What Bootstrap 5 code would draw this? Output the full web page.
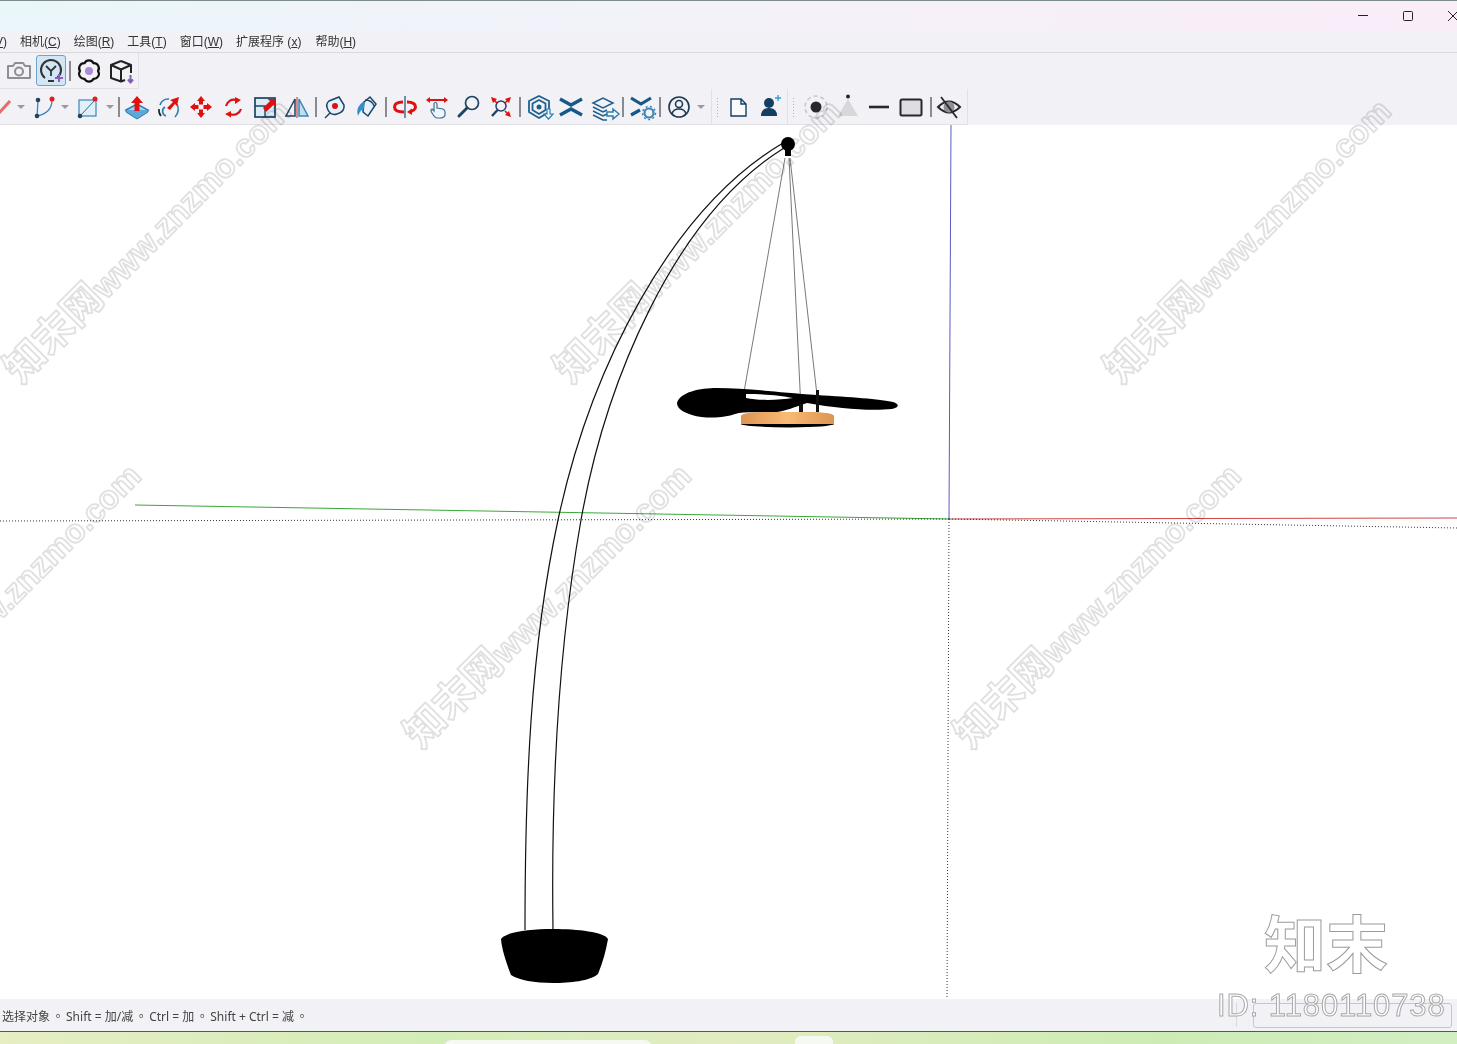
<!DOCTYPE html>
<html lang="zh">
<head>
    <meta charset="UTF-8">
    <title>SketchUp</title>
    <link href="https://cdn.jsdelivr.net/npm/bootstrap@5.3.0/dist/css/bootstrap.min.css" rel="stylesheet">
    <style>
        html, body { height: 100%; margin: 0; overflow: hidden; background: #fff; }
        .app-shell { height: 1044px; width: 1457px; position: relative; overflow: hidden; font-family: "Liberation Sans", "Noto Sans CJK SC", sans-serif; }
        .title-strip { height: 31px; border-top: 1px solid #7d8d8e; background: linear-gradient(90deg, #eaf6fa 0%, #f3f2f9 45%, #f9edf8 100%); margin-bottom: 0; }
        .win-btn { width: 45px; height: 30px; }
        .win-btn svg { display: block; margin: auto; }
        .win-row { margin-right: -18px; }
        .menu-strip { height: 22px; background: #f1f1f6; border-bottom: 1px solid #d9d9de; gap: 13px; font-size: 12px; color: #333; line-height: 23px; white-space: nowrap; padding-left: 0; }
        .menu-strip > .menu-cut { margin-left: -33px; }
        .menu-strip u { text-underline-offset: 1px; }
        .menu-strip .menu-help { margin-left: 1px; }
        .tool-row { background: #f1f1f6; flex: none; }
        .row-top { height: 36px; }
        .row-bottom { height: 36px; }
        .tool-group { background: #f1f1f6; border-right: 1px solid #e0e0e5; border-bottom: 1px solid #e0e0e5; height: 100%; }
        .slot { width: 32px; height: 32px; flex: none; }
        .slot svg { display: block; width: 32px; height: 32px; overflow: visible; }
        .caret-slot { width: 14px; flex: none; display: flex; justify-content: center; }
        .caret-shape { width: 0; height: 0; border-left: 4px solid transparent; border-right: 4px solid transparent; border-top: 4px solid #9a9a9e; }
        .divider { width: 2px; height: 20px; background: #8b8b8f; flex: none; margin: 0 2px; }
        .grip { width: 3px; height: 20px; flex: none; background-image: radial-gradient(#b5b5b8 0.8px, transparent 1px); background-size: 3px 3px; }
        .yactive { width: 30px; height: 31px; background: #d3e6f5; border: 1px solid #6ca4cd; border-radius: 3px; }
        .view3d { flex: 1; min-height: 0; background: #fff; }
        .view3d svg { display: block; }
        .status-strip { height: 32px; flex: none; background: #f1f1f6; font-family: "Noto Sans", "Noto Sans CJK TC", sans-serif; font-size: 12px; color: #444; padding-left: 2px; line-height: 35px; white-space: nowrap; position: relative; }
        .status-strip .stop { padding: 0 2px; }
        .status-cell { position: absolute; left: 1253px; top: 4px; width: 199px; height: 25px; border: 1px solid #c6c6cb; border-radius: 3px; }
        .status-tick { position: absolute; left: 1236px; top: 4px; width: 1px; height: 24px; background: #dadade; }
        .desk-strip { height: 13px; flex: none; border-top: 1px solid #55584f; background: linear-gradient(90deg, #e6eec2 0%, #d3edb8 30%, #e2ecc0 50%, #cdecb5 80%, #d2efc2 100%); position: relative; }
        .desk-pill { position: absolute; background: #f6f8f2; border-radius: 6px 6px 0 0; }
        .pill-a { left: 445px; top: 8px; width: 206px; height: 6px; }
        .pill-b { left: 795px; top: 4px; width: 38px; height: 10px; }
        .mark-overlay { position: absolute; left: 0; top: 0; pointer-events: none; }
        .mark-text { font-family: "Liberation Sans", "Noto Sans CJK SC", sans-serif; font-weight: 700; font-size: 33px; fill: #fff; stroke: #e0e0e0; stroke-width: 1.8px; stroke-linejoin: round; mix-blend-mode: multiply; }
        .mark-cjk { font-family: "Noto Sans CJK SC", sans-serif; font-size: 40px; }
        .logo-text { font-family: "Noto Sans CJK SC", sans-serif; font-weight: 700; font-size: 62px; fill: #fff; stroke: #9c9c9c; stroke-width: 1px; }
        .id-text { font-family: "Liberation Sans", sans-serif; font-size: 31px; fill: #fff; stroke: #a8a8a8; stroke-width: 1px; letter-spacing: .9px; }
    </style>
</head>
<body>
<div class="app-shell d-flex flex-column">

    <!-- title bar -->
    <div class="title-strip d-flex justify-content-end">
        <div class="d-flex win-row">
            <div class="win-btn d-flex align-items-center"><svg width="12" height="12"><path d="M1 5.500H11" stroke="#222"/></svg></div>
            <div class="win-btn d-flex align-items-center"><svg width="12" height="12"><rect x="1.500" y="1.500" width="9" height="9" rx="1" fill="none" stroke="#222"/></svg></div>
            <div class="win-btn d-flex align-items-center"><svg width="12" height="12"><path d="M1 1L11 11M11 1L1 11" stroke="#222"/></svg></div>
        </div>
    </div>

    <!-- menu -->
    <div class="menu-strip d-flex">
        <span class="menu-cut">视图(<u>V</u>)</span><span>相机(<u>C</u>)</span><span>绘图(<u>R</u>)</span><span>工具(<u>T</u>)</span><span>窗口(<u>W</u>)</span><span>扩展程序 (<u>x</u>)</span><span class="menu-help">帮助(<u>H</u>)</span>
    </div>

    <!-- first toolbar row -->
    <div class="tool-row row-top d-flex">
        <div class="tool-group d-flex align-items-center" style="width:139px">
            <div class="slot" style="margin-left:3px"><svg viewBox="0 0 32 32" fill="none" stroke="#8f8f93" stroke-width="2"><path d="M5 11H10L12 8H20L22 11H27V23H5Z" stroke-linejoin="round"/><circle cx="16" cy="16.500" r="4"/></svg></div>
            <div class="yactive d-flex align-items-center justify-content-center" style="margin-left:1px">
                <svg width="28" height="28" viewBox="0 0 28 28" fill="none" stroke="#333" stroke-width="2"><path d="M8 21A10 10 0 1 1 20 21" /><path d="M9 9L14 14L19 9M14 14V19" stroke-width="1.800"/><path d="M11 24H17" stroke-width="2"/><path d="M22 17V25M18 21H26" stroke="#8a63b8" stroke-width="2"/></svg>
            </div>
            <div class="divider" style="margin:0 2px 0 3px"></div>
            <div class="slot"><svg viewBox="0 0 32 32"><path d="M11.500 8.200A5 5 0 0 1 20.500 8.200A5 5 0 0 1 25 16A5 5 0 0 1 20.500 23.800A5 5 0 0 1 11.500 23.800A5 5 0 0 1 7 16A5 5 0 0 1 11.500 8.200Z" fill="none" stroke="#111" stroke-width="2.200" stroke-linejoin="round"/><circle cx="16" cy="16" r="4" fill="#a98ad8"/></svg></div>
            <div class="slot"><svg viewBox="0 0 32 32" fill="none" stroke="#222" stroke-width="2" stroke-linejoin="round"><path d="M16 6L26 10V18M16 6L6 10V23L16 26.500L20 25"/><path d="M6 10L16 14.500L26 10M16 14.500V26.500"/><path d="M25.500 20V27M23 24.500L25.500 27.500L28 24.500" stroke="#7e5fb0"/></svg></div>
        </div>
    </div>

    <!-- second toolbar row -->
    <div class="tool-row row-bottom d-flex">
        <div class="tool-group d-flex align-items-center" style="width:712px">
            <div class="slot" style="margin-left:-11px"><svg viewBox="0 0 32 32"><path d="M10 22L21 10" stroke="#e86a6a" stroke-width="3"/></svg></div>
            <div class="caret-slot" style="margin-left:-7px"><div class="caret-shape"></div></div>
            <div class="slot"><svg viewBox="0 0 32 32" fill="none"><path d="M9 25L10 10" stroke="#3d85b5" stroke-width="1.300"/><path d="M9 25Q24 22 24 9" stroke="#3d85b5" stroke-width="1.300"/><circle cx="9" cy="25" r="2.300" fill="#1d4463"/><circle cx="10" cy="9" r="2.300" fill="#1d4463"/><circle cx="24" cy="8" r="2.500" fill="#dc2020"/></svg></div>
            <div class="caret-slot" style="margin-left:-2px"><div class="caret-shape"></div></div>
            <div class="slot" style="margin-left:-1px"><svg viewBox="0 0 32 32" fill="none"><rect x="8" y="9" width="17" height="16" fill="#dff0fa" stroke="#3d85b5" stroke-width="1.200"/><path d="M9 25L24 9" stroke="#2f6a94" stroke-width="1"/><circle cx="9" cy="25" r="2.300" fill="#1d4463"/><circle cx="24" cy="8" r="2.500" fill="#dc2020"/></svg></div>
            <div class="caret-slot"><div class="caret-shape"></div></div>
            <div class="divider" style="margin:0 1px"></div>
            <div class="slot"><svg viewBox="0 0 32 32"><path d="M5 19L16 13L27 19L16 26Z" fill="#a6d6f2" stroke="#2f7cae" stroke-width="1.500"/><path d="M5 19V21L16 28L27 21V19" fill="#5ba9d8" stroke="#2f7cae"/><path d="M16 5L22 12H18.500V20H13.500V12H10Z" fill="#e01010"/></svg></div>
            <div class="slot"><svg viewBox="0 0 32 32" fill="none"><path d="M7 14A9 9 0 0 1 16 8" stroke="#2f7cae" stroke-width="1.600"/><path d="M8 25A9 9 0 0 1 6 18" stroke="#222" stroke-width="1.600"/><path d="M13 25A5 5 0 0 1 12 16" stroke="#2f7cae" stroke-width="1.600"/><path d="M24 13A12 12 0 0 1 22 26" stroke="#2f7cae" stroke-width="1.600"/><path d="M14 17L20 11L17 9L26 6L24 15L22 13L17 19Z" fill="#e01010"/></svg></div>
            <div class="slot"><svg viewBox="0 0 32 32" fill="#e01010"><path d="M16 5L20 10H18V13.500H14V10H12Z"/><path d="M16 27L20 22H18V18.500H14V22H12Z"/><path d="M5 16L10 12V14H13.500V18H10V20Z"/><path d="M27 16L22 12V14H18.500V18H22V20Z"/></svg></div>
            <div class="slot"><svg viewBox="0 0 32 32" fill="none"><path d="M9 15A8 8 0 0 1 19 9" stroke="#e01010" stroke-width="2.200"/><path d="M24 18A8 8 0 0 1 13 23" stroke="#e01010" stroke-width="2.200"/><path d="M18 6L24 9L18 13Z M14 20L8 23L14 26.500Z" fill="#e01010"/></svg></div>
            <div class="slot"><svg viewBox="0 0 32 32" fill="none"><rect x="6" y="7" width="20" height="19" fill="#dcecf7" stroke="#1d4463" stroke-width="1.700"/><path d="M6 15H16V26" stroke="#1d4463" stroke-width="1.400"/><path d="M14 17L21 10L18.500 8H27V16.500L24.500 14L17 21Z" fill="#e01010"/></svg></div>
            <div class="slot"><svg viewBox="0 0 32 32" fill="none"><path d="M14 8V25H5Z" stroke="#1d4463" stroke-width="1.500"/><path d="M18 8V25H27Z" fill="#bcdff4" stroke="#3d85b5" stroke-width="1.500"/><path d="M16 6V27" stroke="#e06060" stroke-width="1.500"/></svg></div>
            <div class="divider" style="margin:0 1px 0 2px"></div>
            <div class="slot"><svg viewBox="0 0 32 32" fill="none"><path d="M7 27L12 22" stroke="#1d4463" stroke-width="1.500"/><path d="M10 19Q7 13 11 10L21 6L26 14Q27 21 19 23Q13 25 10 19Z" fill="#e4f1fa" stroke="#1d4463" stroke-width="1.500"/><circle cx="17" cy="15" r="3" fill="#e01010"/></svg></div>
            <div class="slot"><svg viewBox="0 0 32 32" fill="none"><path d="M14 11L20 6L26 13L18 25L13 21Z" fill="#e4f1fa" stroke="#1d4463" stroke-width="1.500"/><path d="M15 9Q22 9 24 15" stroke="#1d4463" stroke-width="1.300"/><path d="M14 10Q5 16 8 25Q10 19 14 18Z" fill="#2f8fd0"/></svg></div>
            <div class="divider" style="margin:0 2px 0 3px"></div>
            <div class="slot"><svg viewBox="0 0 32 32" fill="none"><path d="M16 5V27" stroke="#2e5a7e" stroke-width="1.300"/><path d="M14 11C8 11 5.500 13 5.500 16C5.500 19 9 21 15 21" stroke="#e01010" stroke-width="3"/><path d="M18 11C24 11 26.500 13 26.500 16C26.500 18 24 20 21 20.500" stroke="#e01010" stroke-width="3"/><path d="M18 21L23 17.500V24Z" fill="#e01010"/></svg></div>
            <div class="slot"><svg viewBox="0 0 32 32" fill="none"><path d="M6 9H26" stroke="#e01010" stroke-width="2"/><path d="M9 6L5 9L9 12Z M23 6L27 9L23 12Z" fill="#e01010"/><path d="M13 20V13Q13 11.500 14.500 11.500Q16 11.500 16 13V17L22 18Q24 19 24 21V24Q23 27 19 27H16Q14 27 11 22Q9 19 11 18Z" fill="#eef5fb" stroke="#3a6f96" stroke-width="1.200"/></svg></div>
            <div class="slot"><svg viewBox="0 0 32 32" fill="none"><circle cx="19" cy="12" r="6.500" stroke="#1d4463" stroke-width="1.700"/><path d="M14 17L6 25" stroke="#1d4463" stroke-width="3" stroke-linecap="round"/></svg></div>
            <div class="slot"><svg viewBox="0 0 32 32" fill="none"><circle cx="16" cy="15" r="5" stroke="#1d4463" stroke-width="1.500"/><path d="M12.500 19L7 25" stroke="#1d4463" stroke-width="2.400"/><path d="M6 6L12 8L8 12Z M26 6L20 8L24 12Z M26 26L20 24L24 20Z" fill="#e01010"/><path d="M9 9L12 12M23 9L20 12M23 23L20 20" stroke="#e01010" stroke-width="1.600"/></svg></div>
            <div class="divider"></div>
            <div class="slot"><svg viewBox="0 0 32 32" fill="none"><path d="M16 5L26 10V21L16 27L6 21V10Z" stroke="#1f5f8f" stroke-width="1.800"/><path d="M16 9L22.500 12.500V19L16 23L9.500 19V12.500Z" stroke="#1f5f8f" stroke-width="1.800"/><circle cx="16" cy="16" r="2.500" fill="#1f5f8f"/><path d="M24 18V23H21L25.500 28L30 23H27V18Z" fill="#f6fbff" stroke="#2f7cae" stroke-width="1.200"/></svg></div>
            <div class="slot"><svg viewBox="0 0 32 32" fill="none" stroke="#17588a" stroke-width="3.400"><path d="M5 8L16 14L27 8"/><path d="M5 24L16 18L27 24"/></svg></div>
            <div class="slot" style="margin-left:1px"><svg viewBox="0 0 32 32" fill="none" stroke="#1f5f8f" stroke-width="1.500"><path d="M5 12L15 7L25 12L15 17Z"/><path d="M5 16L15 21L19 19M5 20L15 25L19 23M5 24L15 29H19"/><path d="M19 21H25V18L31 23L25 28V25H19Z" fill="#f6fbff" stroke="#2f7cae"/></svg></div>
            <div class="divider" style="margin:0 2px"></div>
            <div class="slot"><svg viewBox="0 0 32 32" fill="none"><path d="M5 7L15 13L25 7" stroke="#17588a" stroke-width="3.200"/><path d="M5 24L14 19" stroke="#17588a" stroke-width="3.200"/><circle cx="23" cy="22" r="4.500" stroke="#3d85b5" stroke-width="2.200"/><circle cx="23" cy="22" r="6.500" stroke="#3d85b5" stroke-width="1.500" stroke-dasharray="2 2.400"/></svg></div>
            <div class="divider" style="margin:0 0 0 1px"></div>
            <div class="slot" style="margin-left:2px"><svg viewBox="0 0 32 32" fill="none" stroke="#1d3a50" stroke-width="1.600"><circle cx="16" cy="16" r="10"/><circle cx="16" cy="13" r="3.500"/><path d="M9 23Q10 18 16 18Q22 18 23 23"/></svg></div>
            <div class="caret-slot" style="margin-left:-1px"><div class="caret-shape"></div></div>
        </div>
        <div class="tool-group d-flex align-items-center" style="width:76px">
            <div class="grip ms-1"></div>
            <div class="slot" style="margin-left:3px"><svg viewBox="0 0 32 32" fill="none"><path d="M9 8H19L24 13V25H9Z M19 8V13H24" stroke="#123f63" stroke-width="1.400" fill="#fbfbfd"/></svg></div>
            <div class="slot"><svg viewBox="0 0 32 32"><circle cx="15" cy="12" r="5" fill="#123f63"/><path d="M7 25Q7 17 15 17Q23 17 23 25Z" fill="#123f63"/><path d="M24 4V10M21 7H27" stroke="#2f9fd0" stroke-width="1.300"/></svg></div>
        </div>
        <div class="tool-group d-flex align-items-center" style="width:180px">
            <div class="grip ms-1"></div>
            <div class="slot" style="margin-left:5px"><svg viewBox="0 0 32 32" fill="none"><circle cx="16" cy="16" r="11" stroke="#c9c9cc" stroke-width="1.600" stroke-dasharray="4 3"/><circle cx="16" cy="16" r="5.500" fill="#25282c"/></svg></div>
            <div class="slot"><svg viewBox="0 0 32 32"><circle cx="16" cy="5.500" r="2" fill="#25282c"/><path d="M16 8L26 25H6Z" fill="#d8d8da"/></svg></div>
            <div class="slot" style="margin-left:-1px"><svg viewBox="0 0 32 32"><path d="M6 16H26" stroke="#25282c" stroke-width="2.600"/></svg></div>
            <div class="slot"><svg viewBox="0 0 32 32"><rect x="5.500" y="8.500" width="21" height="16" rx="1.500" fill="#dedee0" stroke="#25282c" stroke-width="2"/></svg></div>
            <div class="divider" style="margin:0 1px 0 3px"></div>
            <div class="slot"><svg viewBox="0 0 32 32" fill="none"><path d="M5 16Q16 5 27 16Q16 27 5 16Z" stroke="#25282c" stroke-width="2"/><circle cx="16" cy="16" r="5.500" fill="#8f8f93"/><path d="M8 6L24 27" stroke="#25282c" stroke-width="1.800"/></svg></div>
        </div>
    </div>

    <!-- 3d view -->
    <div class="view3d">
        <svg width="1457" height="874" viewBox="0 125 1457 874">
            <path d="M951 125L949 519" stroke="#5a5ac4" fill="none"/>
            <path d="M135 505L949 519" stroke="#3aa83a" fill="none"/>
            <path d="M949 519L1457 518" stroke="#d04444" fill="none"/>
            <g stroke="#333" stroke-dasharray="1 2" fill="none">
                <path d="M0 521L949 519"/>
                <path d="M949 519L947 999"/>
                <path d="M949 519L1457 528"/>
            </g>
            <!-- lamp pole -->
            <g fill="none" stroke="#111" stroke-width="1.200">
                <path d="M525 930C525 790 530 650 558 520C590 370 670 210 783 143"/>
                <path d="M553 930C551 790 558 650 581 520C605 385 672 218 784 148"/>
            </g>
            <!-- wires -->
            <g fill="none" stroke="#555" stroke-width=".8">
                <path d="M785 158L744 392"/>
                <path d="M789 158L801 410"/>
                <path d="M790 158L817 395"/>
            </g>
            <circle cx="788" cy="144" r="7" fill="#000"/>
            <rect x="785" y="148" width="6" height="8" fill="#000"/>
            <!-- shade -->
            <path d="M677 403C680 392 700 388 717 388C745 388 775 392 817 395C850 397 880 399 893 402C900 404 899 408 892 409C870 411 840 409 807 403C795 407 785 411 777 412C760 413 745 411 735 414C725 418 705 419 692 415C682 412 677 408 677 403Z" fill="#000"/>
            <path d="M746 394C760 394 780 395 793 398C780 400 760 401 746 398Z" fill="#fff"/>
            <path d="M816 390H819V412H816ZM799 404H803V412H799Z" fill="#111"/>
            <defs>
                <linearGradient id="discFill" x1="0" x2="1" y1="0" y2="0">
                    <stop offset="0" stop-color="#dd9450"/>
                    <stop offset=".5" stop-color="#f8bb78"/>
                    <stop offset="1" stop-color="#dd9450"/>
                </linearGradient>
            </defs>
            <path d="M741 416Q741 413 760 412H815Q834 413 834 416V425H741Z" fill="url(#discFill)"/>
            <path d="M741 424H834Q830 427 790 427.500Q745 427 741 424Z" fill="#000"/>
            <!-- base -->
            <path d="M501 939C505 932 530 929 553 929C578 929 604 932 608 939C606 950 603 962 598 974C590 981 570 983 553 983C535 983 518 980 511 975C506 962 502 950 501 939Z" fill="#000"/>
        </svg>
    </div>

    <!-- status bar -->
    <div class="status-strip" lang="zh-Hant">
        选择对象<span class="stop">。</span>Shift = 加/减<span class="stop">。</span>Ctrl = 加<span class="stop">。</span>Shift + Ctrl = 减<span class="stop">。</span>
        <div class="status-tick"></div>
        <div class="status-cell"></div>
    </div>

    <div class="desk-strip">
        <div class="desk-pill pill-a"></div>
        <div class="desk-pill pill-b"></div>
    </div>

    <!-- site watermark on top of the window -->
    <svg class="mark-overlay" width="1457" height="1044" viewBox="0 0 1457 1044">
        <text class="mark-text" transform="translate(21,385) rotate(-45)"><tspan class="mark-cjk">知末网</tspan>www.znzmo.com</text>
        <text class="mark-text" transform="translate(571,385) rotate(-45)"><tspan class="mark-cjk">知末网</tspan>www.znzmo.com</text>
        <text class="mark-text" transform="translate(1121,385) rotate(-45)"><tspan class="mark-cjk">知末网</tspan>www.znzmo.com</text>
        <text class="mark-text" transform="translate(-129,750) rotate(-45)"><tspan class="mark-cjk">知末网</tspan>www.znzmo.com</text>
        <text class="mark-text" transform="translate(421,750) rotate(-45)"><tspan class="mark-cjk">知末网</tspan>www.znzmo.com</text>
        <text class="mark-text" transform="translate(971,750) rotate(-45)"><tspan class="mark-cjk">知末网</tspan>www.znzmo.com</text>
        <text class="logo-text" x="1264" y="968">知末</text>
        <text class="id-text" x="1217" y="1016">ID: 1180110738</text>
    </svg>
</div>
<script src="https://cdn.jsdelivr.net/npm/bootstrap@5.3.0/dist/js/bootstrap.bundle.min.js"></script>
</body>
</html>
